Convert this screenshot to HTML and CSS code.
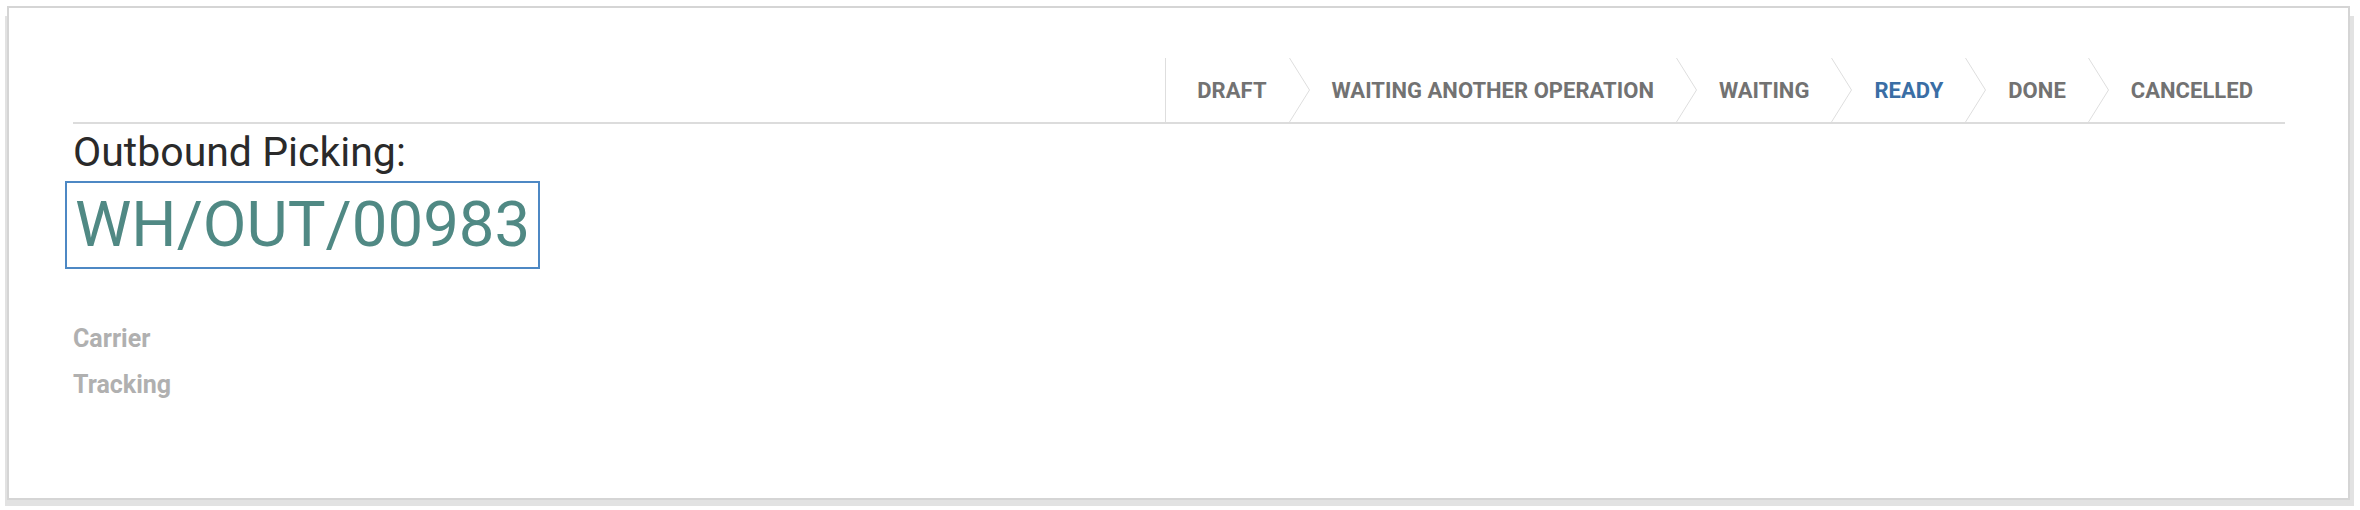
FILE: index.html
```html
<!DOCTYPE html>
<html lang="en">

<head>
    <meta charset="UTF-8">
    <title>WH/OUT/00983</title>
    <link rel="stylesheet" href="styles.css">
</head>

<body>
    <div class="page">
        <div class="sheet">
            <div class="statusbar">
                <div class="status-list">
                    <span class="status first">Draft</span>
                    <svg class="arrow" width="21" height="64" viewBox="0 0 21 64"><polyline points="0.5,0 20.5,32 0.5,64" /></svg>
                    <span class="status">Waiting Another Operation</span>
                    <svg class="arrow" width="21" height="64" viewBox="0 0 21 64"><polyline points="0.5,0 20.5,32 0.5,64" /></svg>
                    <span class="status">Waiting</span>
                    <svg class="arrow" width="21" height="64" viewBox="0 0 21 64"><polyline points="0.5,0 20.5,32 0.5,64" /></svg>
                    <span class="status current">Ready</span>
                    <svg class="arrow" width="21" height="64" viewBox="0 0 21 64"><polyline points="0.5,0 20.5,32 0.5,64" /></svg>
                    <span class="status">Done</span>
                    <svg class="arrow" width="21" height="64" viewBox="0 0 21 64"><polyline points="0.5,0 20.5,32 0.5,64" /></svg>
                    <span class="status last">Cancelled</span>
                </div>
            </div>

            <h2 class="picking-type">Outbound Picking:</h2>
            <div class="name-box">WH/OUT/00983</div>

            <div class="fields">
                <label class="field-label">Carrier</label>
                <label class="field-label">Tracking</label>
            </div>
        </div>
    </div>
</body>

</html>
```

FILE: styles.css
```css
body {
    margin: 0;
    background-color: #fff;
    font-family: Roboto, "Liberation Sans", sans-serif;
}

.page {
    padding: 6px 10px 10px 7px;
    height: 510px;
    box-sizing: border-box;
}

.sheet {
    height: 494px;
    box-sizing: border-box;
    background-color: #fff;
    border: 2px solid #d5d5d5;
    padding: 50px 63px 0 64px;
    /* curled paper shadow on both sides */
    box-shadow: -4px 8px 0 -2px #e2e2e2, 6px 8px 0 -2px #e2e2e2;
}

.statusbar {
    display: flex;
    justify-content: flex-end;
    border-bottom: 2px solid #dcdcdc;
}

.status-list {
    display: flex;
    align-items: center;
    border-left: 1px solid #dedede;
    height: 64px;
}

.status {
    padding: 0 22px;
    font-size: 22px;
    font-weight: bold;
    letter-spacing: 0.03px;
    text-transform: uppercase;
    color: #727272;
}

.status.first {
    padding-left: 31px;
}

.status.last {
    padding-right: 32px;
}

.status.current {
    color: #3a6ea5;
}

.arrow {
    display: block;
    fill: none;
    stroke: #dedede;
    stroke-width: 1;
}

.picking-type {
    margin: 4px 0 0 0;
    font-size: 41px;
    line-height: 48px;
    font-weight: normal;
    color: #2a2a2a;
}

.name-box {
    display: inline-block;
    margin: 5px 0 0 -8px;
    padding: 0 8px;
    border: 2px solid #4d88c4;
    font-size: 63.5px;
    line-height: 84px;
    color: #508984;
}

.fields {
    display: flex;
    flex-direction: column;
    margin: 47px 0 0 0;
}

.field-label {
    font-size: 25px;
    line-height: 46px;
    font-weight: bold;
    color: #b0b0b0;
}
```
